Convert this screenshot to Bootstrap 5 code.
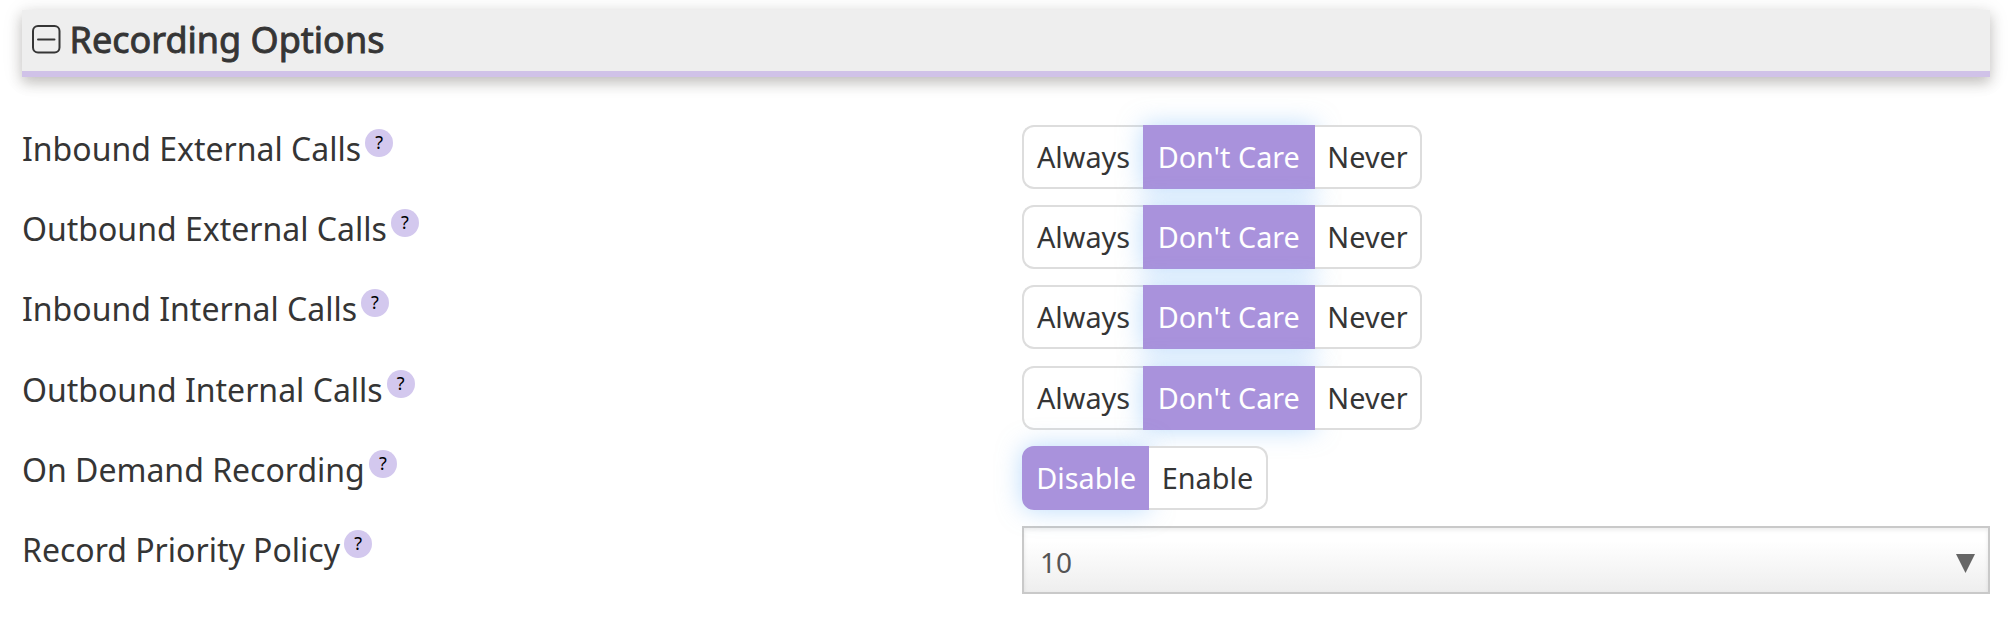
<!DOCTYPE html>
<html lang="en">
<head>
<meta charset="utf-8">
<title>Recording Options</title>
<link rel="stylesheet" href="https://cdn.jsdelivr.net/npm/bootstrap@5.3.0/dist/css/bootstrap.min.css">
<style>
body { font-family: "Noto Sans", sans-serif; color: #353535; background: #fff; padding: 10px 18px 0 22px; overflow: hidden; }
.section-bar { height: 67px; background: #eee; border-bottom: 6px solid #d0c2e8; box-shadow: 0 6px 12px rgba(60,50,40,.24), 0 2px 20px rgba(0,0,0,.1); padding: 0 0 2px 10px; gap: 8.5px; }
.section-bar h2 { font-size: 36px; line-height: 60px; font-weight: 400; -webkit-text-stroke: .9px #353535; }
.options { margin-top: 48px; }
.option { height: 80.2px; }
.option-name { width: 1000px; font-size: 32px; line-height: 48px; }
.help { width: 28px; height: 28px; margin: 4px 0 0 4px; background: #d3c8ee; color: #000; font-size: 18px; line-height: 26px; }
.choice { height: 64px; }
.choice .btn { --bs-btn-color: #353535; --bs-btn-border-color: #ddd; --bs-btn-border-width: 2px; --bs-btn-padding-x: 0; --bs-btn-padding-y: 0; --bs-btn-font-size: 28.8px; --bs-btn-line-height: 60px; --bs-btn-border-radius: 12px; --bs-btn-active-bg: #a992dc; --bs-btn-active-border-color: #a992dc; --bs-btn-active-color: #fff; background-color: #fff; flex: none; }
.choice .btn.active { background-color: #a992dc; box-shadow: 0 0 24px rgba(120,185,250,.5); padding-left: 1.5px; }
.btn-group.choice > .btn:last-child { z-index: 2; }
.btn-group.choice > .btn:not(:first-child) { margin-left: 0; border-left: 0; }
.btn-group.choice > .btn:not(:last-child):not(.active) { border-right: 0; }
.tri .btn:nth-child(1) { width: 121px; }
.tri .btn:nth-child(2) { width: 172px; }
.tri .btn:nth-child(3) { width: 107px; }
.duo .btn:nth-child(1) { width: 127px; }
.duo .btn:nth-child(2) { width: 119px; }
.policy { height: 68px; font-size: 28px; line-height: 60px; color: #555; background: linear-gradient(#fff 20%, #eee); border: 2px solid #c9c9c9; box-shadow: inset 0 2px 4px rgba(0,0,0,.08); padding: 4px 13px 0 16px; }
</style>
</head>
<body>
<div class="section-bar d-flex align-items-center">
  <svg width="29" height="29" viewBox="0 0 29 29" fill="none" stroke="#353535" stroke-width="2"><rect x="1" y="1" width="26.5" height="26.5" rx="5"/><path d="M6 14.5h16.500" stroke-linecap="round"/></svg>
  <h2 class="m-0">Recording Options</h2>
</div>
<div class="options">
  <div class="option d-flex align-items-start">
    <div class="option-name d-flex"><span>Inbound External Calls</span><span class="help rounded-circle text-center">?</span></div>
    <div class="btn-group choice tri"><button class="btn">Always</button><button class="btn active">Don't Care</button><button class="btn">Never</button></div>
  </div>
  <div class="option d-flex align-items-start">
    <div class="option-name d-flex"><span>Outbound External Calls</span><span class="help rounded-circle text-center">?</span></div>
    <div class="btn-group choice tri"><button class="btn">Always</button><button class="btn active">Don't Care</button><button class="btn">Never</button></div>
  </div>
  <div class="option d-flex align-items-start">
    <div class="option-name d-flex"><span>Inbound Internal Calls</span><span class="help rounded-circle text-center">?</span></div>
    <div class="btn-group choice tri"><button class="btn">Always</button><button class="btn active">Don't Care</button><button class="btn">Never</button></div>
  </div>
  <div class="option d-flex align-items-start">
    <div class="option-name d-flex"><span>Outbound Internal Calls</span><span class="help rounded-circle text-center">?</span></div>
    <div class="btn-group choice tri"><button class="btn">Always</button><button class="btn active">Don't Care</button><button class="btn">Never</button></div>
  </div>
  <div class="option d-flex align-items-start">
    <div class="option-name d-flex"><span>On Demand Recording</span><span class="help rounded-circle text-center">?</span></div>
    <div class="btn-group choice duo"><button class="btn active">Disable</button><button class="btn">Enable</button></div>
  </div>
  <div class="option d-flex align-items-start">
    <div class="option-name d-flex flex-shrink-0"><span>Record Priority Policy</span><span class="help rounded-circle text-center">?</span></div>
    <div class="policy flex-grow-1 d-flex justify-content-between align-items-center"><span>10</span><svg class="mt-1" width="19" height="19" viewBox="0 0 19 19" fill="#666"><path d="M0 0h19L9.500 19z"/></svg></div>
  </div>
</div>
<script src="https://cdn.jsdelivr.net/npm/bootstrap@5.3.0/dist/js/bootstrap.bundle.min.js"></script>
</body>
</html>
